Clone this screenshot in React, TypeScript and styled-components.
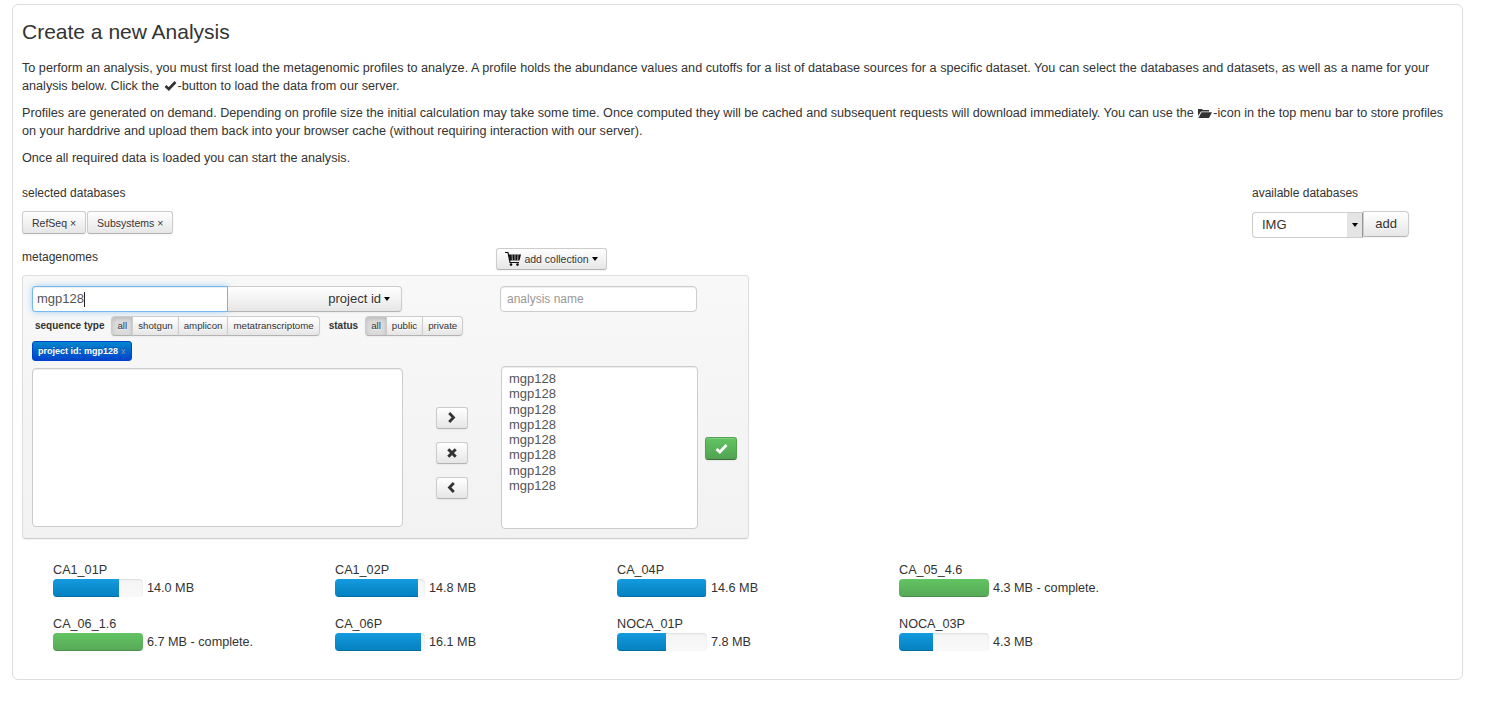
import React from 'react';
import styled, { createGlobalStyle, css } from 'styled-components';

const GlobalStyle = createGlobalStyle`
  html, body {
    margin: 0;
    padding: 0;
    background: #fff;
    color: #333;
    font-family: "Liberation Sans", Arial, sans-serif;
    font-size: 12.65px;
    line-height: 18px;
  }
  * {
    box-sizing: border-box;
  }
`;

const Page = styled.div`
  padding: 4px 26px 32px 12px;
`;

const Panel = styled.div`
  border: 1px solid #ddd;
  border-radius: 6px;
  padding: 9px 10px 28px 9px;
`;

const Title = styled.h2`
  margin: 0 0 9px;
  font-size: 21px;
  font-weight: 400;
  line-height: 36px;
`;

const Text = styled.p`
  margin: 0 0 9px;
`;

const Glyph = styled.svg`
  display: block;
  overflow: visible;
`;

const InlineIcon = styled.span`
  display: inline-block;
  vertical-align: -1px;
  margin: 0 1px 0 1px;
`;

const OkGlyph = ({ color = '#333' }: { color?: string }) => (
  <Glyph width="13" height="11" viewBox="0 0 13 11">
    <path d="M1.5 6 L4.8 9 L11.5 2" fill="none" stroke={color} strokeWidth="2.7" />
  </Glyph>
);

const FolderGlyph = () => (
  <Glyph width="14" height="10" viewBox="0 0 14 10">
    <path d="M0 1 H4 L5 2 H11 V3.5 H3 L0 8 Z" fill="#333" />
    <path d="M3.5 4.3 H14 L11 10 H0.4 Z" fill="#333" />
  </Glyph>
);

const ChevronGlyph = ({ left }: { left?: boolean }) => (
  <Glyph width="9" height="11" viewBox="0 0 9 11">
    <path
      d={left ? 'M6.8 1 L2.5 5.5 L6.8 10' : 'M2.2 1 L6.5 5.5 L2.2 10'}
      fill="none"
      stroke="#333"
      strokeWidth="2.8"
    />
  </Glyph>
);

const RemoveGlyph = () => (
  <Glyph width="10" height="10" viewBox="0 0 10 10">
    <path d="M1.3 1.3 L8.7 8.7 M8.7 1.3 L1.3 8.7" fill="none" stroke="#333" strokeWidth="3" />
  </Glyph>
);

const CartGlyph = () => (
  <Glyph width="16" height="14" viewBox="0 0 16 14">
    <path d="M0 0.5 H3 L5 10.5 H14" fill="none" stroke="#111" strokeWidth="1.2" />
    <path d="M3.6 2.4 H16 L14.5 8.6 H4.8 Z" fill="#111" />
    <path d="M7 2.4 L7.4 8.6 M10 2.4 V8.6 M13 2.4 L12.6 8.6" stroke="#ddd" strokeWidth="0.7" />
    <circle cx="6" cy="12.6" r="1.3" fill="#111" />
    <circle cx="12.5" cy="12.6" r="1.3" fill="#111" />
  </Glyph>
);

const DatabaseRow = styled.div`
  display: flex;
  justify-content: space-between;
  margin-top: 17px;
  padding-right: 43px;
`;

const DatabaseColumn = styled.div`
  display: flex;
  flex-direction: column;
`;

const AvailableColumn = styled(DatabaseColumn)`
  width: 157px;
`;

const FieldLabel = styled.div`
  margin-bottom: 9px;
  font-size: 12px;
`;

const ButtonLine = styled.div`
  display: flex;
  gap: 1px;
`;

const buttonFace = css`
  display: inline-flex;
  align-items: center;
  justify-content: center;
  background: linear-gradient(to bottom, #fff, #e6e6e6);
  border: 1px solid #ccc;
  border-bottom-color: #b3b3b3;
  box-shadow: inset 0 1px 0 rgba(255, 255, 255, 0.2), 0 1px 2px rgba(0, 0, 0, 0.05);
  color: #333;
  font-family: inherit;
  text-shadow: 0 1px 1px rgba(255, 255, 255, 0.75);
  white-space: nowrap;
`;

const SmallButton = styled.div`
  ${buttonFace}
  height: 23px;
  padding: 0 9px;
  border-radius: 3px;
  font-size: 10.5px;
  line-height: 14px;
`;

const SelectLine = styled.div`
  display: flex;
`;

const SelectBox = styled.div`
  display: flex;
  justify-content: space-between;
  width: 112px;
  height: 26px;
  margin-top: 1px;
  border: 1px solid #ccc;
  border-right-color: #999;
  border-radius: 4px 0 0 4px;
  background: #fff;
  overflow: hidden;
`;

const SelectValue = styled.span`
  padding-left: 9px;
  font-size: 13px;
  line-height: 24px;
`;

const SelectArrow = styled.span`
  display: flex;
  align-items: center;
  justify-content: center;
  width: 15px;
  background: #e4e4e4;
  &::after {
    content: '';
    border-top: 4px solid #000;
    border-left: 3px solid transparent;
    border-right: 3px solid transparent;
  }
`;

const AddButton = styled.div`
  ${buttonFace}
  width: 46px;
  height: 26px;
  border-radius: 0 4px 4px 0;
  font-size: 13px;
`;

const MetagenomeHeader = styled.div`
  display: flex;
  width: 585px;
  justify-content: space-between;
  align-items: flex-start;
  margin: 10px 0 5px;
`;

const MetagenomeLabel = styled.div`
  font-size: 12px;
`;

const ButtonCaret = styled.span`
  display: inline-block;
  margin-left: 3px;
  border-top: 4px solid #000;
  border-left: 3px solid transparent;
  border-right: 3px solid transparent;
`;

const CollectionButton = styled(SmallButton)`
  gap: 3px;
  width: 111px;
  height: 22px;
  padding: 0;
  font-size: 10.5px;
  ${ButtonCaret} {
    margin-left: 0;
  }
`;

const Well = styled.div`
  display: grid;
  grid-template-columns: 371px 97px 198px 1fr;
  grid-template-rows: 80px 163px;
  width: 727px;
  padding: 10px 0 9px 9px;
  border: 1px solid #ddd;
  border-bottom-color: #ccc;
  border-radius: 4px;
  background: linear-gradient(to bottom, #f8f8f8, #f2f2f2);
  box-shadow: 0 1px 1px rgba(0, 0, 0, 0.05);
`;

const FilterColumn = styled.div`
  display: flex;
  flex-direction: column;
  grid-column: 1 / span 2;
`;

const SearchLine = styled.div`
  display: flex;
`;

const SearchInput = styled.div`
  display: flex;
  align-items: center;
  width: 196px;
  height: 26px;
  padding-left: 4px;
  background: #fff;
  border: 1px solid rgba(82, 168, 236, 0.8);
  border-radius: 4px 0 0 4px;
  box-shadow: inset 0 1px 1px rgba(0, 0, 0, 0.075), 0 0 6px rgba(82, 168, 236, 0.5);
  color: #555;
  font-size: 13px;
`;

const TextCaret = styled.span`
  width: 1px;
  height: 15px;
  background: #222;
`;

const SearchTypeButton = styled.div`
  ${buttonFace}
  justify-content: flex-end;
  width: 174px;
  height: 26px;
  padding-right: 11px;
  border-left: 0;
  border-radius: 0 4px 4px 0;
  font-size: 13px;
`;

const FilterLine = styled.div`
  display: flex;
  align-items: center;
  height: 20px;
  margin-top: 4px;
  padding-left: 3px;
`;

const FilterLabel = styled.b`
  margin-right: 7px;
  font-size: 10px;
`;

const FilterGroup = styled.div`
  display: flex;
  margin-right: 9px;
`;

const FilterButton = styled.div<{ $active?: boolean }>`
  ${buttonFace}
  height: 20px;
  padding: 0 5px;
  margin-left: -1px;
  font-size: 9.7px;
  &:first-child {
    margin-left: 0;
    border-radius: 4px 0 0 4px;
  }
  &:last-child {
    border-radius: 0 4px 4px 0;
  }
  ${p =>
    p.$active &&
    css`
      background: #dcdcdc;
      box-shadow: inset 0 2px 4px rgba(0, 0, 0, 0.15), 0 1px 2px rgba(0, 0, 0, 0.05);
      padding: 0 5px;
    `}
`;

const TagLine = styled.div`
  display: flex;
  margin-top: 5px;
`;

const FilterTag = styled.div`
  display: flex;
  align-items: center;
  gap: 3px;
  height: 20px;
  padding: 0 5px;
  border: 1px solid #04c;
  border-radius: 3px;
  background: linear-gradient(to bottom, #0088cc, #0044cc);
  color: #fff;
  font-size: 9px;
  font-weight: 700;
  text-shadow: 0 -1px 0 rgba(0, 0, 0, 0.25);
`;

const TagClose = styled.span`
  color: #7f9fc6;
  font-weight: 400;
`;

const ProfileBox = styled.div`
  width: 371px;
  height: 159px;
  margin-top: 2px;
  background: #fff;
  border: 1px solid #ccc;
  border-radius: 4px;
  box-shadow: inset 0 1px 1px rgba(0, 0, 0, 0.075);
`;

const MoveColumn = styled.div`
  display: flex;
  flex-direction: column;
  align-items: center;
  justify-content: center;
  gap: 13px;
  padding-top: 10px;
`;

const MoveButton = styled.div`
  ${buttonFace}
  width: 32px;
  height: 22px;
  border-radius: 3px;
`;

const NameInput = styled.input`
  display: block;
  width: 197px;
  height: 26px;
  padding: 0 6px;
  border: 1px solid #ccc;
  border-radius: 4px;
  background: #fff;
  box-shadow: inset 0 1px 1px rgba(0, 0, 0, 0.075);
  font-family: inherit;
  font-size: 12px;
  outline: none;
  &::placeholder {
    color: #999;
    opacity: 1;
  }
`;

const SelectedList = styled.div`
  width: 197px;
  height: 163px;
  margin-left: 1px;
  padding: 4px 7px;
  background: #fff;
  border: 1px solid #ccc;
  border-radius: 4px;
  box-shadow: inset 0 1px 1px rgba(0, 0, 0, 0.075);
  color: #555;
  font-size: 13px;
  line-height: 15.3px;
`;

const LoadColumn = styled.div`
  display: flex;
  align-items: center;
  padding: 2px 0 0 7px;
`;

const LoadButton = styled.div`
  ${buttonFace}
  width: 32px;
  height: 23px;
  background: linear-gradient(to bottom, #62c462, #51a351);
  border-color: #51a351 #51a351 #387038;
  border-radius: 3px;
`;

const ProfileGrid = styled.div`
  display: grid;
  grid-template-columns: repeat(4, 282px);
  margin-top: 22px;
  padding-left: 31px;
  row-gap: 18px;
`;

const ProfileItem = styled.div`
  display: flex;
  flex-direction: column;
`;

const ProfileName = styled.div`
  line-height: 18px;
`;

const ProfileProgress = styled.div`
  display: flex;
  align-items: center;
  gap: 4px;
`;

const ProgressTrack = styled.div`
  width: 90px;
  height: 18px;
  overflow: hidden;
  border-radius: 4px;
  background: linear-gradient(to bottom, #f5f5f5, #f9f9f9);
  box-shadow: inset 0 1px 2px rgba(0, 0, 0, 0.1);
`;

const ProgressFill = styled.div<{ $done?: boolean }>`
  height: 100%;
  background: ${p =>
    p.$done
      ? 'linear-gradient(to bottom, #62c462, #57a957)'
      : 'linear-gradient(to bottom, #149bdf, #0480be)'};
  box-shadow: inset 0 -1px 0 rgba(0, 0, 0, 0.15);
`;

const profiles = [
  { name: 'CA1_01P', size: '14.0 MB', fill: 66 },
  { name: 'CA1_02P', size: '14.8 MB', fill: 83 },
  { name: 'CA_04P', size: '14.6 MB', fill: 89 },
  { name: 'CA_05_4.6', size: '4.3 MB - complete.', fill: 90, done: true },
  { name: 'CA_06_1.6', size: '6.7 MB - complete.', fill: 90, done: true },
  { name: 'CA_06P', size: '16.1 MB', fill: 86 },
  { name: 'NOCA_01P', size: '7.8 MB', fill: 49 },
  { name: 'NOCA_03P', size: '4.3 MB', fill: 34 },
];

export default function App() {
  return (
    <Page>
      <GlobalStyle />
      <Panel>
        <Title>Create a new Analysis</Title>
        <Text>
          To perform an analysis, you must first load the metagenomic profiles to analyze. A profile holds the abundance values and cutoffs for a list of database sources for a specific dataset. You can select the databases and datasets, as well as a name for your analysis below. Click the{' '}
          <InlineIcon><OkGlyph /></InlineIcon>-button to load the data from our server.
        </Text>
        <Text>
          Profiles are generated on demand. Depending on profile size the initial calculation may take some time. Once computed they will be cached and subsequent requests will download immediately. You can use the{' '}
          <InlineIcon><FolderGlyph /></InlineIcon>-icon in the top menu bar to store profiles on your harddrive and upload them back into your browser cache (without requiring interaction with our server).
        </Text>
        <Text>Once all required data is loaded you can start the analysis.</Text>

        <DatabaseRow>
          <DatabaseColumn>
            <FieldLabel>selected databases</FieldLabel>
            <ButtonLine>
              <SmallButton>RefSeq ×</SmallButton>
              <SmallButton>Subsystems ×</SmallButton>
            </ButtonLine>
          </DatabaseColumn>
          <AvailableColumn>
            <FieldLabel>available databases</FieldLabel>
            <SelectLine>
              <SelectBox>
                <SelectValue>IMG</SelectValue>
                <SelectArrow />
              </SelectBox>
              <AddButton>add</AddButton>
            </SelectLine>
          </AvailableColumn>
        </DatabaseRow>

        <MetagenomeHeader>
          <MetagenomeLabel>metagenomes</MetagenomeLabel>
          <CollectionButton>
            <CartGlyph />
            add collection
            <ButtonCaret />
          </CollectionButton>
        </MetagenomeHeader>

        <Well>
          <FilterColumn>
            <SearchLine>
              <SearchInput>
                mgp128
                <TextCaret />
              </SearchInput>
              <SearchTypeButton>
                project id
                <ButtonCaret />
              </SearchTypeButton>
            </SearchLine>
            <FilterLine>
              <FilterLabel>sequence type</FilterLabel>
              <FilterGroup>
                <FilterButton $active>all</FilterButton>
                <FilterButton>shotgun</FilterButton>
                <FilterButton>amplicon</FilterButton>
                <FilterButton>metatranscriptome</FilterButton>
              </FilterGroup>
              <FilterLabel>status</FilterLabel>
              <FilterGroup>
                <FilterButton $active>all</FilterButton>
                <FilterButton>public</FilterButton>
                <FilterButton>private</FilterButton>
              </FilterGroup>
            </FilterLine>
            <TagLine>
              <FilterTag>
                project id: mgp128 <TagClose>x</TagClose>
              </FilterTag>
            </TagLine>
          </FilterColumn>
          <div>
            <NameInput placeholder="analysis name" readOnly />
          </div>
          <div />
          <ProfileBox />
          <MoveColumn>
            <MoveButton><ChevronGlyph /></MoveButton>
            <MoveButton><RemoveGlyph /></MoveButton>
            <MoveButton><ChevronGlyph left /></MoveButton>
          </MoveColumn>
          <SelectedList>
            {Array.from({ length: 8 }, (_, i) => (
              <div key={i}>mgp128</div>
            ))}
          </SelectedList>
          <LoadColumn>
            <LoadButton><OkGlyph color="#fff" /></LoadButton>
          </LoadColumn>
        </Well>

        <ProfileGrid>
          {profiles.map(profile => (
            <ProfileItem key={profile.name}>
              <ProfileName>{profile.name}</ProfileName>
              <ProfileProgress>
                <ProgressTrack>
                  <ProgressFill $done={profile.done} style={{ width: profile.fill }} />
                </ProgressTrack>
                {profile.size}
              </ProfileProgress>
            </ProfileItem>
          ))}
        </ProfileGrid>
      </Panel>
    </Page>
  );
}
